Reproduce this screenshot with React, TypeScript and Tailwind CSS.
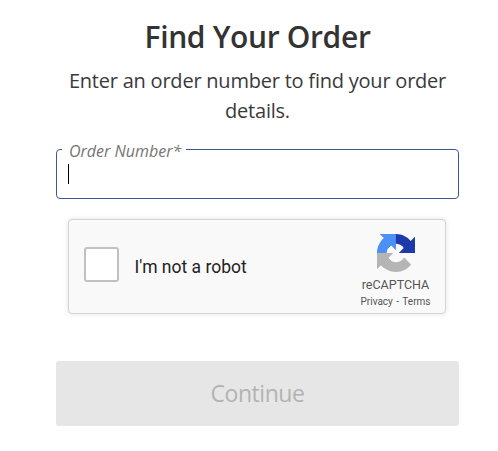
import React, { useState } from 'react';

interface OrderFieldProps {
  label: string;
}

// Outlined input whose label sits in a gap of the top border
const OrderField: React.FC<OrderFieldProps> = ({ label }) => {
  return (
    <div className="relative mt-[23px] w-full h-[50px] rounded-[4px] border border-[#3b5998] flex items-center pl-[11px]">
      <label className="absolute left-[5px] -top-[10px] h-[22px] w-[124px] pl-[7px] bg-white text-base leading-[22px] italic text-[#757575] whitespace-nowrap">
        {label}
      </label>
      {/* Text cursor */}
      <span className="w-px h-5 bg-black" />
    </div>
  );
};

const RecaptchaLogo: React.FC = () => {
  return (
    <svg className="w-[38px] h-[38px]" viewBox="0 0 64 64">
      <path
        fill="#1c3aa9"
        d="M64 31.955l-.033-1.37V4.687l-7.16 7.16C50.948 4.674 42.033.093 32.05.093c-10.4 0-19.622 4.96-25.458 12.64l11.736 11.86a15.55 15.55 0 0 1 4.754-5.334c2.05-1.6 4.952-2.906 8.968-2.906.485 0 .86.057 1.135.163 4.976.393 9.288 3.14 11.828 7.124l-8.307 8.307L64 31.953"
      />
      <path
        fill="#4a90f5"
        d="M31.862.094l-1.37.033H4.594l7.16 7.16C4.58 13.147 0 22.06 0 32.046c0 10.4 4.96 19.622 12.64 25.458L24.5 45.768a15.55 15.55 0 0 1-5.334-4.754c-1.6-2.05-2.906-4.952-2.906-8.968 0-.485.057-.86.163-1.135.393-4.976 3.14-9.288 7.124-11.828l8.307 8.307L31.86.095"
      />
      <path
        fill="#b5b5b5"
        d="M.001 32.045l.033 1.37v25.898l7.16-7.16c5.86 7.173 14.774 11.754 24.76 11.754 10.4 0 19.622-4.96 25.458-12.64l-11.736-11.86a15.55 15.55 0 0 1-4.754 5.334c-2.05 1.6-4.952 2.906-8.968 2.906-.485 0-.86-.057-1.135-.163-4.976-.393-9.288-3.14-11.828-7.124l8.307-8.307c-10.522.04-22.4.066-27.295-.005"
      />
    </svg>
  );
};

const Recaptcha: React.FC = () => {
  const [checked, setChecked] = useState(false);

  return (
    <div className="mt-5 ml-3 self-start w-[378px] h-[95px] flex rounded-[4px] border border-[#d3d3d3] bg-[#f9f9f9] shadow-[0_0_4px_1px_rgba(0,0,0,0.08)] font-['Roboto',sans-serif]">
      {/* Checkbox */}
      <button
        aria-label="I'm not a robot"
        onClick={() => setChecked(!checked)}
        className="mt-[27px] ml-[15px] size-[35px] shrink-0 rounded-[3px] border-2 border-[#c1c1c1] bg-white text-xl leading-none text-green-600"
      >
        {checked ? '✓' : ''}
      </button>
      <span className="mt-[35px] ml-[15.5px] text-[17.5px] leading-6 text-[#222] whitespace-nowrap">I'm not a robot</span>

      {/* Branding */}
      <div className="ml-auto mr-[10px] mt-[14px] w-[78px] flex flex-col items-center text-[#555]">
        <RecaptchaLogo />
        <span className="mt-[5px] mr-px text-[12.5px] leading-4 whitespace-nowrap">reCAPTCHA</span>
        <span className="mt-[3px] mr-px text-[10px] leading-3 whitespace-nowrap">
          Privacy <span className="mx-px">-</span> Terms
        </span>
      </div>
    </div>
  );
};

const App: React.FC = () => {
  return (
    <main className="w-[498px] h-[451px] pl-[56px] bg-white font-['Open_Sans',sans-serif] overflow-hidden">
      <div className="w-[403px] pt-4 flex flex-col items-center">
        <h1 className="text-[30px] leading-[42px] font-semibold tracking-[-0.35px] text-[#333] whitespace-nowrap">
          Find Your Order
        </h1>
        <p className="mt-2 text-center text-xl leading-[30px] tracking-[-0.22px] text-[#3a3a3a]">
          Enter an order number to find your order
          <br />
          details.
        </p>
        <OrderField label="Order Number*" />
        <Recaptcha />
        <button className="mt-[47px] w-full h-[65px] rounded-[3px] bg-[#e6e6e6] text-[23px] tracking-[-0.45px] text-[#b3b3b3]">
          Continue
        </button>
      </div>
    </main>
  );
};

export default App;
